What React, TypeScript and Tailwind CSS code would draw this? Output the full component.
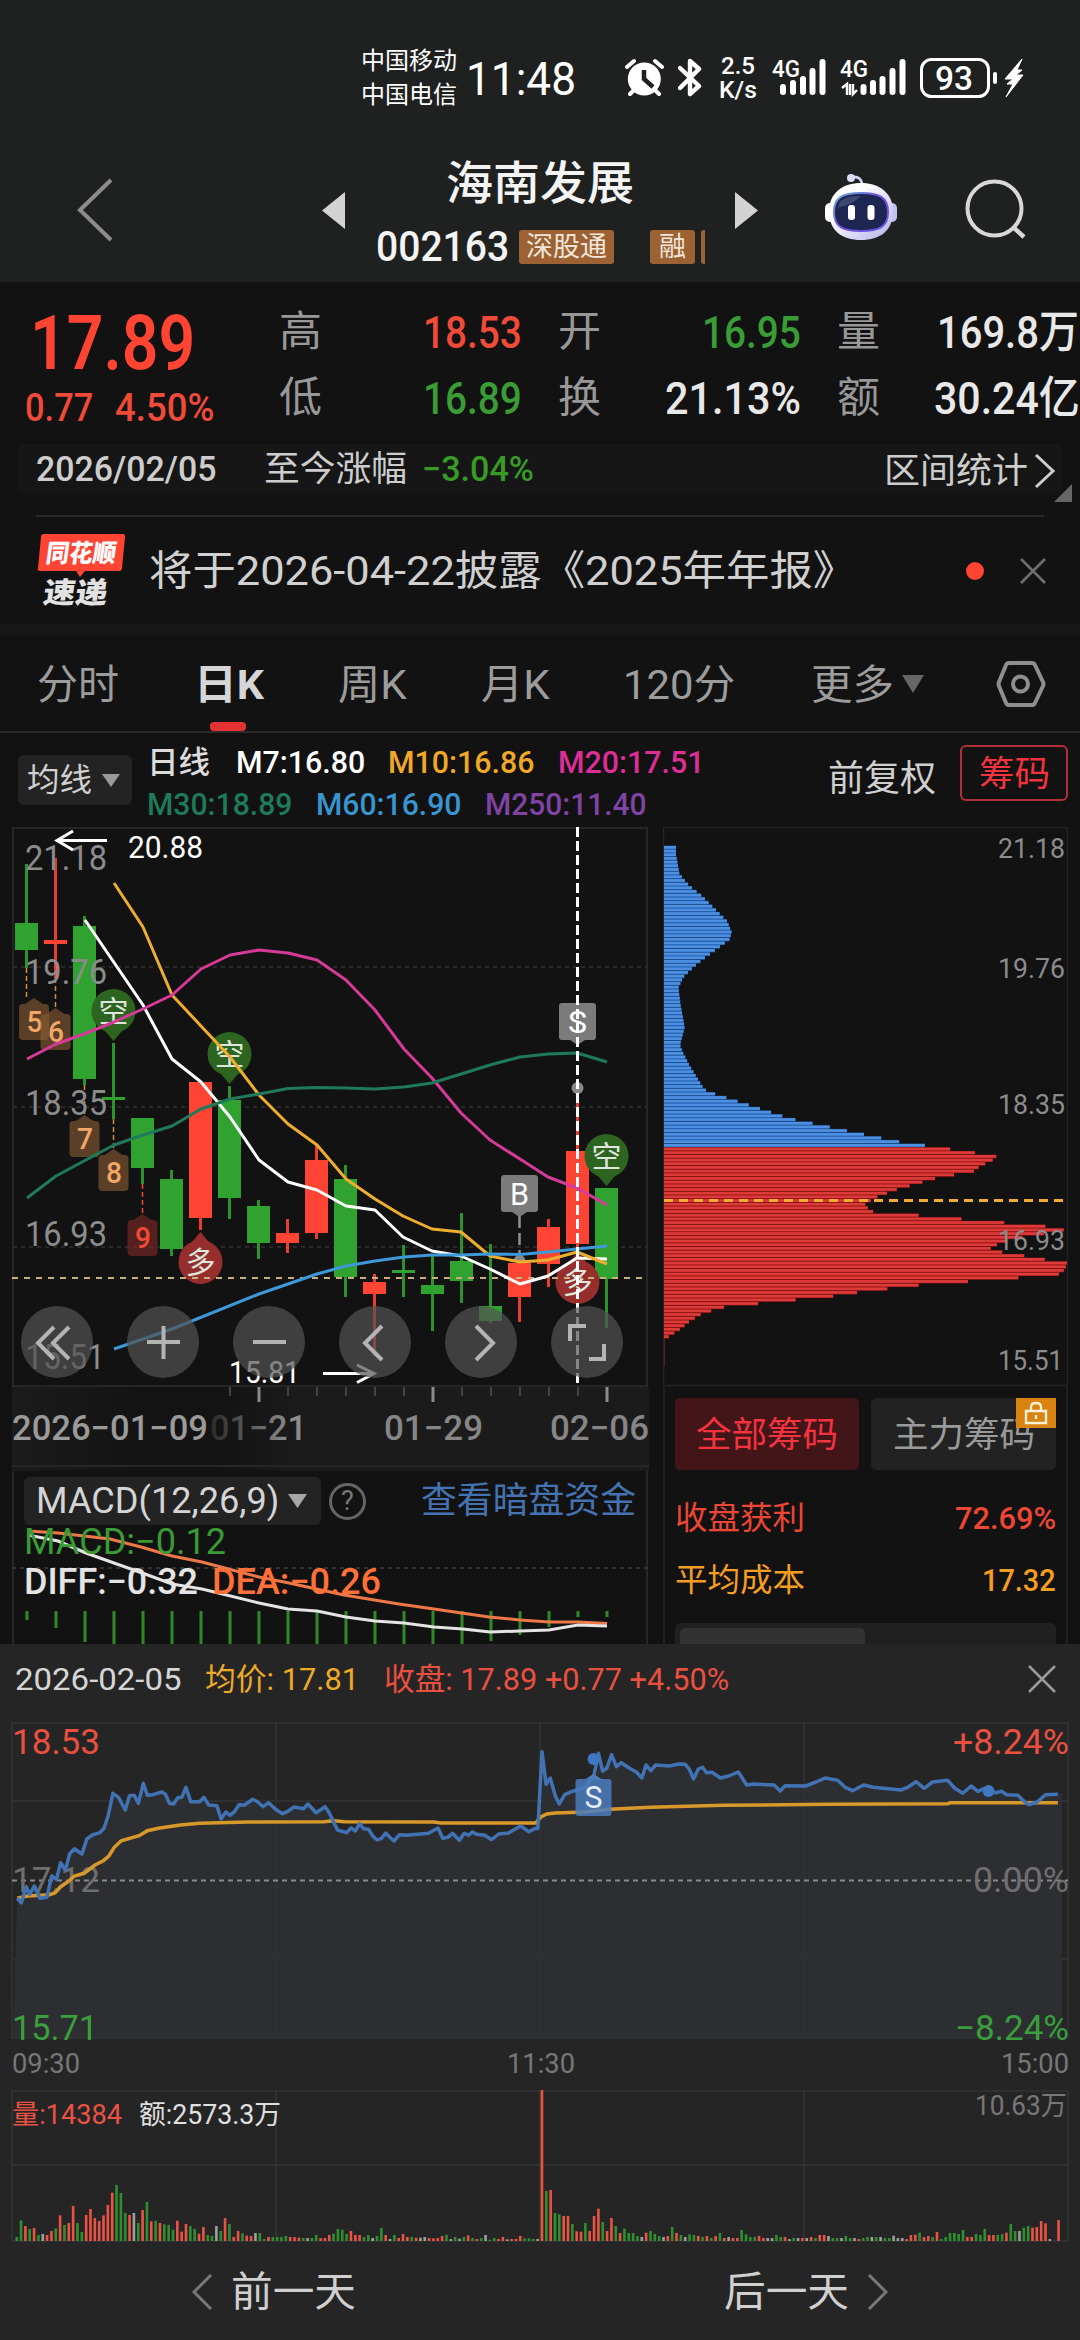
import React, { useLayoutEffect, useRef } from 'react';

// Text squeezed or stretched horizontally so that it fills exactly `w` pixels
function Fit({ w, className = '', children }: { w: number; className?: string; children: React.ReactNode }) {
  const ref = useRef<HTMLSpanElement>(null);
  useLayoutEffect(() => {
    const el = ref.current;
    if (el) el.style.transform = `scaleX(${w / el.offsetWidth})`;
  }, [w]);
  return (
    <span className={`block shrink-0 leading-none ${className}`} style={{ width: w }}>
      <span ref={ref} className="inline-block origin-left whitespace-pre align-top leading-none">
        {children}
      </span>
    </span>
  );
}

type LabelProps = { x: number; y: number; w: number; size: number; fill: string; children: string; weight?: number; opacity?: number };

function Label({ x, y, w, size, fill, children, weight = 400, opacity = 1 }: LabelProps) {
  return (
    <text x={x} y={y} fontSize={size} fill={fill} fontWeight={weight} textLength={w} lengthAdjust="spacingAndGlyphs" opacity={opacity}>
      {children}
    </text>
  );
}

const RED = '#ff4433';
const GREEN = '#30a22f';

function Bars({ x }: { x: number[] }) {
  const tops = [85, 81, 77, 69, 60];
  return (
    <g stroke="#fff" strokeWidth="6" strokeLinecap="round">
      {x.map((v, i) => (
        <line key={v} x1={v} x2={v} y1={tops[i] + 3} y2={93} />
      ))}
    </g>
  );
}

function StatusBar() {
  return (
    <div className="flex h-[156px] items-center pl-[361px] text-white">
      <div className="flex flex-col gap-[10px] text-[24px]">
        <Fit w={96}>中国移动</Fit>
        <Fit w={96}>中国电信</Fit>
      </div>
      <Fit w={110} className="ml-[9px] text-[47px]">11:48</Fit>
      <svg className="ml-[49px] h-[40px] w-[39px]" viewBox="624 58 39 40">
        <circle cx="643.3" cy="79" r="16.5" fill="#fff" />
        <path d="M626 67l7-6M661 67l-7-6M629 94l4-4M658 94l-4-4" stroke="#fff" strokeWidth="4" strokeLinecap="round" />
        <path d="M643 70v9l9 8" fill="none" stroke="#1f2121" strokeWidth="4.5" />
      </svg>
      <svg className="ml-[14px] h-[40px] w-[24px]" viewBox="677 58 24 40">
        <path d="M679 68l19 18-9 8V61l9 8-19 19" fill="none" stroke="#fff" strokeWidth="4.4" strokeLinejoin="round" strokeLinecap="round" />
      </svg>
      <div className="ml-[17px] flex flex-col items-center text-[24px] font-medium">
        <Fit w={34} className="h-[24px]">2.5</Fit>
        <Fit w={38} className="h-[24px]">K/s</Fit>
      </div>
      <svg className="ml-[14px] h-[42px] w-[56px] overflow-visible" viewBox="771 58 56 42">
        <Label x={772} y={78} w={28} size={24} fill="#fff" weight={500}>4G</Label>
        <Bars x={[783, 793, 803, 812.5, 822.5]} />
      </svg>
      <svg className="ml-[13px] h-[42px] w-[67px] overflow-visible" viewBox="840 58 67 42">
        <Label x={840} y={78} w={28} size={24} fill="#fff" weight={500}>4G</Label>
        <path d="M842 89l5-4v11M850 85v11M853 85v10l4-4" fill="none" stroke="#fff" strokeWidth="2.4" />
        <Bars x={[863.5, 873, 882.5, 892.5, 902.5]} />
      </svg>
      <svg className="ml-[12px] h-[42px] w-[106px]" viewBox="919 57 106 42">
        <rect x="921.5" y="59.5" width="67" height="37" rx="10" fill="none" stroke="#fff" strokeWidth="3" />
        <Label x={935} y={90} w={38} size={33} fill="#fff" weight={500}>93</Label>
        <path d="M995 74v8" stroke="#fff" strokeWidth="4" strokeLinecap="round" />
        <path d="M1022 59l-17 20h8l-6 5 6 0-7 13 17-22h-7l6-5h-5z" fill="#fff" stroke="#fff" strokeLinejoin="round" />
      </svg>
    </div>
  );
}

function Robot() {
  return (
    <svg className="h-[68px] w-[74px]" viewBox="824 173 74 68">
      <defs>
        <linearGradient id="shell" x1="0" y1="0" x2="1" y2="1">
          <stop offset="0.3" stopColor="#fff" />
          <stop offset="1" stopColor="#b5b0ea" />
        </linearGradient>
        <linearGradient id="rim" x1="0" y1="0" x2="1" y2="1">
          <stop offset="0" stopColor="#5fb0d8" />
          <stop offset="0.5" stopColor="#7a4be0" />
          <stop offset="1" stopColor="#5a58d8" />
        </linearGradient>
      </defs>
      <path d="M852 177c7-1 10 3 10 8" fill="none" stroke="#d4d4f4" strokeWidth="2.6" />
      <circle cx="851" cy="178" r="4" fill="#dcdcf8" />
      <rect x="825" y="203" width="10" height="19" rx="5" fill="#fff" />
      <rect x="887" y="203" width="10" height="19" rx="5" fill="#c2c0f2" />
      <path d="M861 183c18 0 32 10 32 28 0 20-13 29-32 29s-32-9-32-29c0-18 14-28 32-28z" fill="url(#shell)" />
      <path d="M861 193c18 0 27 4 27 19s-9 19-27 19-27-4-27-19 9-19 27-19z" fill="#1d2650" stroke="url(#rim)" strokeWidth="2" />
      <path d="M839 203c4-6 12-7 22-7-5 6-14 9-23 12z" fill="#3c4670" />
      <rect x="848" y="205" width="7" height="15" rx="3" fill="#fff" />
      <rect x="867.500" y="205" width="7" height="15" rx="3" fill="#fff" />
    </svg>
  );
}

function Header() {
  return (
    <div className="flex h-[126px] items-start">
      <svg className="mt-[21px] ml-[75px] h-[66px] w-[40px]" viewBox="0 0 40 66">
        <path d="M36 3L5 33l31 30" fill="none" stroke="#8c8c8c" strokeWidth="4" />
      </svg>
      <svg className="mt-[36px] ml-[206px] h-[37px] w-[25px]" viewBox="0 0 25 37">
        <path d="M24 0v37L1 18.500z" fill="#d3d3d3" />
      </svg>
      <div className="ml-[30px] flex w-[329px] flex-col">
        <Fit w={188} className="mt-[4px] ml-[70px] text-[46px] font-medium text-[#f4f4f4]">海南发展</Fit>
        <div className="mt-[20px] flex items-center">
          <Fit w={133} className="text-[42px] font-medium text-[#f4f4f4]">002163</Fit>
          <div className="ml-[10px] flex h-[34px] w-[95px] items-center justify-center rounded-[3px] bg-[#9c6234] text-[27px] text-[#f2e6da]">
            <Fit w={81}>深股通</Fit>
          </div>
          <div className="ml-[36px] flex h-[34px] w-[45px] items-center justify-center rounded-[3px] bg-[#9c6234] text-[27px] text-[#f2e6da]">
            <Fit w={27}>融</Fit>
          </div>
          <div className="ml-[6px] h-[34px] w-[4px] rounded-l-[3px] bg-[#9c6234]" />
        </div>
      </div>
      <svg className="mt-[36px] ml-[29px] h-[37px] w-[25px]" viewBox="0 0 25 37">
        <path d="M1 0v37l23-18.500z" fill="#d3d3d3" />
      </svg>
      <div className="mt-[17px] ml-[65px]">
        <Robot />
      </div>
      <svg className="mt-[22px] ml-[67px] h-[62px] w-[62px]" viewBox="965 178 62 62">
        <circle cx="994.500" cy="208.500" r="27" fill="none" stroke="#d8d8d8" strokeWidth="4" />
        <path d="M1013 227l11 10" stroke="#d8d8d8" strokeWidth="4.500" />
      </svg>
    </div>
  );
}

function Quote() {
  return (
    <div className="flex h-[162px] text-[45px] font-medium text-[#e8e8e8]">
      <div className="w-[280px]">
        <Fit w={165} className="mt-[23px] ml-[30px] text-[76px] font-semibold text-[#ff4433]">17.89</Fit>
        <div className="mt-[8px] flex text-[38px] text-[#f04a38]">
          <Fit w={68} className="ml-[25px]">0.77</Fit>
          <Fit w={99} className="ml-[22px]">4.50%</Fit>
        </div>
      </div>
      <div className="flex-1 pt-[17px]">
        <div className="flex h-[66px] items-center">
          <Fit w={43} className="text-[42px] font-normal text-[#989898]">高</Fit>
          <Fit w={99} className="ml-[101px] text-[#f04a38]">18.53</Fit>
          <Fit w={43} className="ml-[36px] text-[42px] font-normal text-[#989898]">开</Fit>
          <Fit w={99} className="ml-[101px] text-[#399c35]">16.95</Fit>
          <Fit w={43} className="ml-[36px] text-[42px] font-normal text-[#989898]">量</Fit>
          <Fit w={142} className="ml-[57px]">169.8万</Fit>
        </div>
        <div className="flex h-[66px] items-center">
          <Fit w={43} className="text-[42px] font-normal text-[#989898]">低</Fit>
          <Fit w={99} className="ml-[101px] text-[#399c35]">16.89</Fit>
          <Fit w={43} className="ml-[36px] text-[42px] font-normal text-[#989898]">换</Fit>
          <Fit w={136} className="ml-[64px]">21.13%</Fit>
          <Fit w={43} className="ml-[36px] text-[42px] font-normal text-[#989898]">额</Fit>
          <Fit w={146} className="ml-[54px]">30.24亿</Fit>
        </div>
      </div>
    </div>
  );
}

function DateBar() {
  return (
    <div className="relative mx-[18px] flex h-[51px] items-center rounded-md bg-[#161616] pl-[18px] text-[35px] text-[#cdcdcd]">
      <Fit w={180} className="font-medium">2026/02/05</Fit>
      <Fit w={143} className="ml-[48px]">至今涨幅</Fit>
      <Fit w={112} className="ml-[15px] font-medium text-[#399a26]">−3.04%</Fit>
      <Fit w={144} className="mt-[4px] ml-[350px]">区间统计</Fit>
      <svg className="mt-[2px] ml-[6px] h-[36px] w-[22px]" viewBox="0 0 22 36">
        <path d="M2 2l17 16L2 34" fill="none" stroke="#cdcdcd" strokeWidth="3" />
      </svg>
      <svg className="absolute top-[40px] -right-[10px] h-[18px] w-[18px]" viewBox="0 0 18 18">
        <path d="M18 0v18H0z" fill="#666" />
      </svg>
    </div>
  );
}

function News() {
  return (
    <div className="flex h-[107px] items-center pl-[36px]">
      <svg className="h-[76px] w-[92px]" viewBox="36 533 92 76">
        <path d="M44 534h79q2 0 2 3l-3 31q0 3-3 3H85l-5 6-4-6H40q-3 0-2-3l3-31q0-3 3-3z" fill="#ff4433" />
        <g transform="skewX(-8) translate(79 0)">
          <Label x={45} y={562} w={70} size={25} fill="#fff" weight={800}>同花顺</Label>
          <Label x={48} y={603} w={64} size={29} fill="#e2e2e2" weight={900}>速递</Label>
        </g>
      </svg>
      <Fit w={707} className="mt-[2px] ml-[21px] text-[41px] text-[#d0d0d0]">将于2026-04-22披露《2025年年报》</Fit>
      <div className="ml-[110px] h-[18px] w-[18px] rounded-full bg-[#ff4433]" />
      <svg className="ml-[36px] h-[26px] w-[26px]" viewBox="0 0 26 26">
        <path d="M1 1l24 24M25 1L1 25" stroke="#707070" strokeWidth="2.500" />
      </svg>
    </div>
  );
}

function Tabs() {
  return (
    <div className="relative flex h-[97px] items-center border-b-2 border-[#2a2a2a] text-[41px] text-[#9c9c9c]">
      <Fit w={82} className="mt-[4px] ml-[37px]">分时</Fit>
      <Fit w={70} className="mt-[4px] ml-[75px] font-bold text-[#d6d6d6]">日K</Fit>
      <Fit w={69} className="mt-[4px] ml-[74px]">周K</Fit>
      <Fit w={69} className="mt-[4px] ml-[74px]">月K</Fit>
      <Fit w={112} className="mt-[4px] ml-[73px]">120分</Fit>
      <Fit w={83} className="mt-[4px] ml-[76px]">更多</Fit>
      <svg className="ml-[8px] h-[18px] w-[22px]" viewBox="0 0 22 18">
        <path d="M0 0h22L11 18z" fill="#666" />
      </svg>
      <svg className="ml-[72px] h-[48px] w-[50px]" viewBox="0 0 50 48">
        <path d="M13 3h23q2 0 3 2l8 17q1 2 0 4l-8 17q-1 2-3 2H13q-2 0-3-2L3 26q-1-2 0-4l7-17q1-2 3-2z" fill="none" stroke="#8e8e8e" strokeWidth="4" />
        <circle cx="24.500" cy="24" r="7.500" fill="none" stroke="#8e8e8e" strokeWidth="4" />
      </svg>
      <div className="absolute bottom-0 left-[210px] h-[9px] w-[36px] rounded-[4px] bg-[#e53333]" />
    </div>
  );
}

function MaRow() {
  return (
    <div className="flex h-[94px] text-[32px] font-medium">
      <div className="mt-[22px] ml-[18px] flex h-[50px] w-[114px] items-center rounded-[6px] bg-[#232323] pl-[9px] text-[#d0d0d0]">
        <Fit w={65} className="font-normal">均线</Fit>
        <svg className="ml-[10px] h-[13px] w-[18px]" viewBox="0 0 18 13">
          <path d="M0 0h18l-9 13z" fill="#9a9a9a" />
        </svg>
      </div>
      <div className="ml-[15px] w-[560px] pt-[13px]">
        <div className="flex h-[32px] items-center">
          <Fit w={63} className="text-[31px] text-[#dcdcdc]">日线</Fit>
          <Fit w={129} className="ml-[26px] text-white">M7:16.80</Fit>
          <Fit w={146} className="ml-[23px] text-[#f0a828]">M10:16.86</Fit>
          <Fit w={146} className="ml-[24px] text-[#dc2f96]">M20:17.51</Fit>
        </div>
        <div className="mt-[10px] flex h-[32px] items-center">
          <Fit w={145} className="text-[#1f7a58]">M30:18.89</Fit>
          <Fit w={145} className="ml-[24px] text-[#3a94cf]">M60:16.90</Fit>
          <Fit w={162} className="ml-[24px] text-[#7f44a4]">M250:11.40</Fit>
        </div>
      </div>
      <Fit w={108} className="mt-[28px] ml-[121px] text-[36px] font-normal text-[#cfcfcf]">前复权</Fit>
      <div className="mt-[12px] ml-[24px] flex h-[56px] w-[108px] items-center justify-center rounded-[6px] border-2 border-[#b02f38] text-[35px] font-normal text-[#f5333f]">
        <Fit w={71} className="mt-[3px]">筹码</Fit>
      </div>
    </div>
  );
}

// [high, bodyTop, bodyBottom, low, rising]
const candles: [number, number, number, number, boolean][] = [
  [864, 923, 950, 968, false], [858, 940, 944, 978, true], [916, 926, 1079, 1085, false],
  [1043, 1097, 1100, 1119, false], [1118, 1118, 1168, 1184, false], [1170, 1179, 1249, 1256, false],
  [1082, 1082, 1218, 1230, true], [1086, 1100, 1198, 1219, false], [1200, 1206, 1243, 1259, false],
  [1219, 1233, 1243, 1253, true], [1146, 1160, 1233, 1239, true], [1165, 1179, 1277, 1297, false],
  [1274, 1282, 1294, 1356, true], [1245, 1270, 1273, 1297, false], [1255, 1285, 1294, 1331, false],
  [1213, 1261, 1281, 1303, false], [1244, 1306, 1321, 1323, false], [1258, 1263, 1297, 1322, true],
  [1219, 1227, 1264, 1287, true], [1088, 1151, 1244, 1256, true], [1188, 1188, 1279, 1328, false],
];

const averages = [
  { color: '#ffffff', points: '85,920 143,1005 172,1059 201,1082 230,1117 259,1160 288,1182 317,1190 346,1206 375,1210 403,1237 432,1251 461,1256 490,1269 520,1284 548,1276 577,1258 607,1259' },
  { color: '#edad2e', points: '114,883 143,927 172,995 201,1026 230,1057 259,1095 288,1124 317,1145 346,1179 375,1199 403,1216 432,1229 461,1232 490,1256 520,1262 548,1260 577,1252 607,1264' },
  { color: '#d63a98', points: '27,1059 56,1044 84,1034 114,1022 143,1009 172,995 201,969 230,955 259,950 288,953 317,960 346,980 375,1010 404,1049 432,1078 461,1113 490,1140 520,1159 548,1177 577,1188 607,1205' },
  { color: '#1f7a5c', points: '27,1198 56,1176 84,1161 114,1145 143,1135 172,1126 201,1109 230,1099 259,1094 288,1088.5 317,1087.5 346,1088 375,1089 404,1087 432,1083 461,1074 490,1065 520,1057 548,1054 577,1053 607,1062' },
  { color: '#3d98d8', points: '114,1349 172,1329 259,1294 317,1274 346,1266 375,1261 404,1257 432,1255 461,1255 490,1254 520,1254.5 548,1252 577,1249 607,1246' },
];

function CountTag({ x, y, n, hot }: { x: number; y: number; n: string; hot?: boolean }) {
  const bg = hot ? '#7f2a26' : '#8a5c36';
  return (
    <g>
      <path d={`M${x - 9} ${y}l9-6 9 6`} fill={bg} opacity="0.6" />
      <rect x={x - 15} y={y} width="30" height="36" rx="4" fill={bg} opacity="0.62" />
      <Label x={x - 7.5} y={y + 28} w={16} size={29} fill={hot ? '#f04a38' : '#f2a766'} weight={500}>{n}</Label>
    </g>
  );
}

function Bubble({ x, y, short }: { x: number; y: number; short?: boolean }) {
  const fill = short ? '#2c6420' : '#962e2e';
  return (
    <g>
      <circle cx={x} cy={y} r="22" fill={fill} />
      <path d={short ? `M${x - 11} ${y + 17}l11 13 11-13z` : `M${x - 11} ${y - 17}l11-13 11 13z`} fill={fill} />
      <Label x={x - 15} y={y + 11} w={30} size={30} fill="#dfe6dc">{short ? '空' : '多'}</Label>
    </g>
  );
}

function TradeTag({ x, y, children }: { x: number; y: number; children: string }) {
  return (
    <g>
      <path d={`M${x - 9} ${y + 36}l9 6 9-6z`} fill="#7b7b7b" />
      <rect x={x - 18.5} y={y} width="37" height="37" rx="3" fill="#7b7b7b" />
      <Label x={x - 9.5} y={y + 30} w={19} size={32} fill="#fff">{children}</Label>
    </g>
  );
}

function CandleChart() {
  return (
    <svg className="block h-[560px] w-[637px] overflow-visible" viewBox="12 827 637 560">
      <path d="M13 1387V828h634v558H13" fill="none" stroke="#262626" strokeWidth="2" />
      <g stroke="#292929" strokeWidth="2" strokeDasharray="4 4">
        <path d="M13 967h634M13 1107h634M13 1247h634" />
      </g>
      {candles.map(([high, top, bottom, low, up], i) => {
        const x = 26.5 + 29 * i;
        return (
          <g key={i} fill={up ? RED : GREEN}>
            <rect x={x - 1.5} y={high} width="3" height={low - high} opacity="0.9" />
            <rect x={x - 11.5} y={top} width="23" height={bottom - top} />
          </g>
        );
      })}
      <g strokeDasharray="5 3" strokeWidth="1.5" stroke="#d08a50">
        <path d="M26.500 968v30M55.500 978v30M84.500 1085v30M113.500 1119v30" />
        <path d="M142.500 1184v30" stroke="#f04a38" />
      </g>
      <g>
        <Label x={25} y={870} w={82} size={35} fill="#8c8c8c">21.18</Label>
        <Label x={25} y={984} w={82} size={35} fill="#8c8c8c">19.76</Label>
        <Label x={25} y={1115} w={82} size={35} fill="#8c8c8c">18.35</Label>
        <Label x={25} y={1246} w={82} size={35} fill="#8c8c8c">16.93</Label>
        <Label x={25} y={1369} w={80} size={35} fill="#8c8c8c">15.51</Label>
      </g>
      <CountTag x={34} y={1004} n="5" />
      <CountTag x={55.5} y={1014} n="6" />
      <CountTag x={84.5} y={1121} n="7" />
      <CountTag x={113.5} y={1155} n="8" />
      <CountTag x={142.5} y={1220} n="9" hot />
      <Bubble x={113.5} y={1011} short />
      <Bubble x={229.5} y={1054} short />
      <Bubble x={606.5} y={1156} short />
      <Bubble x={200.5} y={1262} />
      <Bubble x={577.5} y={1282} />
      <path d="M12 1278h636" stroke="#cbb07c" strokeWidth="2" strokeDasharray="6 6" />
      <TradeTag x={577.5} y={1003}>S</TradeTag>
      <TradeTag x={519.5} y={1175}>B</TradeTag>
      <path d="M519.500 1216v40" stroke="#909090" strokeWidth="2.500" strokeDasharray="12 5" />
      <circle cx="577.500" cy="1088" r="6" fill="#888" />
      <path d="M513.500 1261a6 6 0 0 1 12 0z" fill="#888" />
      {averages.map((line) => (
        <polyline key={line.color} points={line.points} fill="none" stroke={line.color} strokeWidth="3" strokeLinejoin="round" />
      ))}
      <path d="M577.500 827v557" stroke="#fff" strokeWidth="3" strokeDasharray="10 4" />
      <g fill="none" stroke="#fff" strokeWidth="3">
        <path d="M107 840.500H58M73 831l-16 9.500L73 850" />
        <path d="M323 1373.500h50M357 1365l17 8.500-17 9" />
      </g>
      <Label x={128} y={858} w={75} size={31} fill="#fff">20.88</Label>
      <Label x={229} y={1383} w={71} size={31} fill="#fff">15.81</Label>
    </svg>
  );
}

const tools = [
  'M33 21L17 37l16 16M48 21L32 37l16 16',
  'M20 36h33M36.500 20v33',
  'M20 36h33',
  'M43 20L26 37l17 17',
  'M31 20l17 17-17 17',
  'M19 35V20h16M38 53h15V38',
];

function DateAxis() {
  const ticks = [230, 259, 288, 317, 346, 375, 404, 433, 462, 491, 520, 549, 578, 607];
  const long = [259, 433, 607];
  return (
    <svg className="block h-[84px] w-[637px]" viewBox="12 1387 637 84">
      <defs>
        <linearGradient id="fade">
          <stop offset="0" stopColor="#1b1b1b" />
          <stop offset="0.2" stopColor="#131313" />
          <stop offset="0.33" stopColor="#131313" />
          <stop offset="0.45" stopColor="#1b1b1b" />
        </linearGradient>
        <linearGradient id="dim" gradientUnits="userSpaceOnUse" x1="212" x2="290">
          <stop offset="0" stopColor="#2c2c2c" />
          <stop offset="1" stopColor="#8c8c8c" />
        </linearGradient>
      </defs>
      <rect x="12" y="1387" width="637" height="84" fill="url(#fade)" />
      {ticks.map((x) => (
        <line key={x} x1={x} x2={x} y1={1387} y2={long.includes(x) ? 1402 : 1396} stroke={long.includes(x) ? '#8c8c8c' : '#444'} strokeWidth={long.includes(x) ? 3 : 2} />
      ))}
      <Label x={12} y={1440} w={196} size={35} fill="#9a9a9a" weight={500}>2026−01−09</Label>
      <Label x={210} y={1440} w={97} size={35} fill="url(#dim)" weight={500}>01−21</Label>
      <Label x={384} y={1440} w={99} size={35} fill="#868686" weight={500}>01−29</Label>
      <Label x={550} y={1440} w={99} size={35} fill="#868686" weight={500}>02−06</Label>
      <path d="M12 1466h637" stroke="#262626" strokeWidth="2" />
    </svg>
  );
}

const macdBottoms = [1620, 1628, 1642, 1644, 1644, 1644, 1644, 1644, 1644, 1644, 1644, 1644, 1644, 1644, 1644, 1644, 1641, 1635, 1627, 1617, 1617];

function Macd() {
  return (
    <div className="relative h-[173px] w-[637px]">
      <svg className="absolute inset-0 h-[173px] w-[637px]" viewBox="12 1471 637 173">
        <path d="M13 1471v173M647 1471v173" stroke="#262626" strokeWidth="2" />
        <path d="M12 1568h636" stroke="#333" strokeWidth="2" strokeDasharray="4 4" />
        {macdBottoms.map((b, i) => (
          <rect key={i} x={25.5 + 29 * i} y="1611" width="3" height={b - 1611} fill="#2f8a26" />
        ))}
        <polyline points="28,1531 58,1533 110,1539 141,1547 172,1556 202,1562 259,1577 289,1583 344,1595 399,1604 434,1609 489,1617 520,1620 549,1622 578,1622 607,1623.5" fill="none" stroke="#ee7848" strokeWidth="3" />
        <polyline points="28,1535 58,1541 86,1553 114,1563 145,1574 172,1584 202,1589 259,1603 288,1609 317,1611 346,1617 375,1621 404,1623 434,1627 463,1629 490,1632 520,1631 549,1630 578,1625 607,1626" fill="none" stroke="#e4e4e4" strokeWidth="3" />
        <Label x={24} y={1554} w={202} size={36} fill="#3a9a35">MACD:−0.12</Label>
        <Label x={24} y={1594} w={174} size={36} fill="#e4e4e4" weight={500}>DIFF:−0.32</Label>
        <Label x={212} y={1594} w={169} size={36} fill="#ff7038" weight={500}>DEA:−0.26</Label>
      </svg>
      <div className="relative flex items-center pt-[6px] pl-[12px]">
        <div className="flex h-[48px] w-[297px] items-center rounded-[6px] bg-[#232323] pl-[12px] text-[36px] text-[#d4d4d4]">
          <Fit w={243}>MACD(12,26,9)</Fit>
          <svg className="ml-[9px] h-[14px] w-[19px]" viewBox="0 0 19 14">
            <path d="M0 0h19l-9.500 14z" fill="#a8a8a8" />
          </svg>
        </div>
        <div className="ml-[8px] flex h-[37px] w-[37px] items-center justify-center rounded-full border-[3px] border-[#666] text-[27px] leading-none text-[#777]">
          ?
        </div>
        <Fit w={215} className="ml-[55px] text-[36px] text-[#4573b2]">查看暗盘资金</Fit>
      </div>
    </div>
  );
}

// chip distribution outline, [row offset, bar end]
const chipShape: [number, number][] = [
  [73, 78], [98, 78], [150, 88], [165, 100], [186, 120], [212, 155], [243, 188], [284, 232], [315, 245], [335, 238],
  [357, 207], [388, 162], [410, 133], [440, 100], [470, 85], [520, 92], [580, 104], [630, 90], [650, 98], [690, 120],
  [755, 163], [767, 195], [836, 420], [900, 740], [910, 815], [921, 896], [931, 968], [941, 1040], [952, 1029],
  [970, 990], [985, 970], [1000, 870], [1035, 740], [1055, 683], [1075, 645], [1096, 660], [1106, 793], [1137, 1180],
  [1147, 1248], [1158, 1185], [1168, 1120], [1178, 1075], [1188, 1045], [1198, 1017], [1209, 1050], [1219, 1115],
  [1230, 1180], [1240, 1251], [1250, 1248], [1271, 1236], [1281, 1121], [1292, 960], [1302, 812], [1322, 630],
  [1333, 556], [1363, 228], [1374, 186], [1384, 154], [1405, 118], [1426, 90], [1447, 56], [1452, 45],
];

function chipLength(z: number) {
  const i = chipShape.findIndex(([row]) => row >= z);
  if (i <= 0) return chipShape[0][1];
  const [r0, v0] = chipShape[i - 1];
  const [r1, v1] = chipShape[i];
  return v0 + ((v1 - v0) * (z - r0)) / (r1 - r0);
}

const chipRows = Array.from({ length: 134 }, (_, i) => 77 + i * 10.3);

function ChipChart() {
  return (
    <svg className="block h-[560px] w-[405px]" viewBox="663 827 405 560">
      <path d="M663.500 1387V827.500h404V1387M663 1385.500h405" fill="none" stroke="#242424" strokeWidth="1.500" />
      {chipRows.map((z) => {
        const y = 820 + z / 2.8;
        const width = (chipLength(z) - 42) / 3;
        const blue = z < 916;
        return (
          <g key={z}>
            <rect x="664" y={y - 1.84} width={width} height="3.68" fill={blue ? '#1f5dae' : '#9c1414'} />
            <rect x="664" y={y - 1.5} width={width} height="2.7" fill={blue ? '#4d90e2' : '#dc3b39'} />
          </g>
        );
      })}
      <path d="M664.500 1339v28" stroke="#5a2020" strokeWidth="1" />
      <path d="M664 1200.500h400" stroke="#f2ab33" strokeWidth="3" strokeDasharray="9 6" />
      <Label x={998} y={857.5} w={67} size={27} fill="#8c8c8c">21.18</Label>
      <Label x={998} y={978} w={67} size={27} fill="#8c8c8c">19.76</Label>
      <Label x={998} y={1114} w={67} size={27} fill="#8c8c8c">18.35</Label>
      <Label x={998} y={1250} w={67} size={27} fill="#8c8c8c">16.93</Label>
      <Label x={998} y={1370} w={65} size={27} fill="#8c8c8c">15.51</Label>
    </svg>
  );
}

function ChipPanel() {
  return (
    <div className="w-[405px]">
      <ChipChart />
      <div className="h-[257px] border-x-2 border-[#202020] pt-[11px] pr-[10px] pl-[10px] text-[35px]">
        <div className="flex gap-[12px]">
          <div className="flex h-[72px] w-[184px] items-center justify-center rounded-[5px] bg-[#421518] text-[#f5333f]">
            <Fit w={142} className="mt-[3px]">全部筹码</Fit>
          </div>
          <div className="relative flex h-[72px] w-[185px] items-center justify-center rounded-[5px] bg-[#222222] text-[#9a9a9a]">
            <Fit w={142} className="mt-[3px]">主力筹码</Fit>
            <div className="absolute top-0 right-0 flex h-[30px] w-[40px] items-center justify-center bg-[#d98310]">
              <svg className="h-[24px] w-[24px]" viewBox="0 0 24 24">
                <path d="M2 10h20v12H2zM7 10V6q0-4 5-4t5 4v4M12 14v4" fill="none" stroke="#fff0d8" strokeWidth="2.400" />
              </svg>
            </div>
          </div>
        </div>
        <div className="mt-[17px] flex h-[62px] items-center justify-between text-[32px] text-[#ec4634]">
          <Fit w={130}>收盘获利</Fit>
          <Fit w={101} className="font-medium">72.69%</Fit>
        </div>
        <div className="flex h-[62px] items-center justify-between text-[32px] text-[#f59d22]">
          <Fit w={130}>平均成本</Fit>
          <Fit w={74} className="font-medium">17.32</Fit>
        </div>
        <div className="mt-[12px] h-[60px] rounded-t-[6px] bg-[#202020] pt-[5px] pl-[5px]">
          <div className="h-[55px] w-[185px] rounded-t-[5px] bg-[#323232]" />
        </div>
      </div>
    </div>
  );
}

// price and average paths on a 1568 x 1320 grid
const price: [number, number][] = [
  [25, 745], [31, 758], [38, 710], [43, 733], [50, 708], [58, 745], [68, 742], [75, 678], [82, 688], [88, 638], [95, 660],
  [101, 612], [108, 596], [119, 612], [126, 567], [134, 555], [145, 548], [151, 535], [157, 498], [164, 430], [172, 442],
  [182, 480], [188, 437], [195, 436], [201, 460], [208, 400], [214, 436], [222, 434], [235, 426], [240, 432], [246, 460],
  [252, 462], [258, 443], [264, 442], [270, 412], [277, 455], [290, 455], [296, 442], [303, 465], [315, 467], [321, 507],
  [328, 486], [334, 496], [341, 484], [347, 464], [355, 465], [367, 448], [374, 455], [382, 470], [390, 458], [400, 478],
  [410, 491], [418, 484], [427, 471], [441, 476], [447, 462], [459, 488], [472, 470], [478, 488], [490, 540], [503, 548],
  [510, 534], [516, 543], [522, 521], [528, 536], [535, 538], [542, 560], [548, 570], [554, 565], [560, 549], [566, 562],
  [572, 573], [580, 554], [590, 556], [622, 550], [636, 534], [643, 565], [650, 562], [657, 550], [667, 571], [674, 550],
  [680, 556], [686, 546], [692, 553], [704, 556], [714, 569], [724, 552], [738, 549], [756, 528], [768, 545], [776, 536],
  [781, 535], [787, 305], [793, 403], [799, 384], [806, 436], [812, 462], [820, 434], [830, 425], [838, 420], [850, 412],
  [856, 395], [862, 378], [869, 310], [875, 363], [881, 355], [888, 314], [895, 350], [902, 338], [914, 355], [924, 366],
  [932, 384], [938, 345], [945, 362], [952, 345], [972, 348], [985, 342], [995, 343], [1001, 358], [1007, 387],
  [1014, 357], [1020, 352], [1026, 368], [1034, 367], [1046, 384], [1058, 378], [1072, 366], [1078, 385], [1084, 405],
  [1094, 402], [1124, 405], [1133, 423], [1140, 407], [1170, 408], [1186, 395], [1198, 384], [1216, 391], [1228, 413],
  [1238, 422], [1254, 405], [1268, 412], [1290, 416], [1308, 420], [1318, 412], [1330, 395], [1342, 415], [1354, 396],
  [1376, 391], [1386, 414], [1398, 430], [1410, 408], [1420, 424], [1428, 416], [1436, 422], [1446, 428], [1454, 424],
  [1462, 434], [1478, 436], [1486, 452], [1494, 464], [1506, 456], [1518, 434], [1536, 433],
];

const avg: [number, number][] = [
  [25, 745], [40, 738], [72, 734], [80, 728], [88, 710], [98, 696], [108, 678], [122, 670], [138, 645], [150, 632],
  [158, 618], [166, 592], [176, 572], [202, 557], [214, 542], [230, 535], [262, 525], [290, 520], [360, 516], [470, 515],
  [485, 512], [500, 515], [630, 516], [640, 519], [778, 519], [786, 500], [794, 492], [806, 489], [850, 486], [885, 478],
  [945, 472], [1050, 466], [1200, 463], [1376, 461], [1380, 458], [1536, 458],
];

const toPoints = (data: [number, number][]) => data.map(([x, y]) => `${(x / 1.452).toFixed(1)},${(1650 + y / 3).toFixed(1)}`).join(' ');

function TimeChart() {
  return (
    <svg className="block h-[372px] w-[1080px]" viewBox="0 1708 1080 372">
      <polygon points={`${toPoints(price)} 1062,1794 1062,2038 13,2038`} fill="#2d2e31" />
      <g stroke="#2f3031" strokeWidth="2" fill="none">
        <path d="M12 1723h1056v315H12zM276 1723v315M540 1723v315M804 1723v315M12 1801h1056M12 1959h1056" />
      </g>
      <path d="M12 1880.500h1056" stroke="#8a8a8a" strokeWidth="2" strokeDasharray="5 4" />
      <Label x={12} y={1754} w={88} size={35} fill="#ea5040">18.53</Label>
      <Label x={953} y={1754} w={116} size={35} fill="#ea5040">+8.24%</Label>
      <Label x={12} y={1892} w={88} size={35} fill="#6f6f6f">17.12</Label>
      <Label x={973} y={1892} w={96} size={35} fill="#6f6f6f">0.00%</Label>
      <Label x={12} y={2040} w={86} size={35} fill="#3a9e3c">15.71</Label>
      <Label x={955} y={2040} w={114} size={35} fill="#3a9e3c">−8.24%</Label>
      <polyline points={toPoints(avg)} fill="none" stroke="#d9992a" strokeWidth="3.5" />
      <polyline points={toPoints(price)} fill="none" stroke="#4173b4" strokeWidth="3.5" strokeLinejoin="round" />
      <circle cx="593.500" cy="1759" r="6" fill="#3f78c0" />
      <circle cx="988.500" cy="1791" r="6" fill="#3f78c0" />
      <path d="M584 1780l9.500-6 9.500 6z" fill="#4a7dbd" />
      <rect x="575.500" y="1779" width="36" height="37" rx="3" fill="#4a7dbd" opacity="0.85" />
      <Label x={584.5} y={1808} w={18} size={31} fill="#e8eef6">S</Label>
      <Label x={12} y={2073} w={68} size={28} fill="#777">09:30</Label>
      <Label x={507} y={2073} w={68} size={28} fill="#777">11:30</Label>
      <Label x={1001} y={2073} w={68} size={28} fill="#777">15:00</Label>
    </svg>
  );
}

// one entry per minute: colour (g down, r up, w flat) and height
const volumes =
  'g12 g62 r45 g36 r39 g18 w21 r18 r30 g38 r77 g48 r54 r105 g54 g27 r78 r96 r69 r60 r77 r108 r145 g168 g144 g84 r78 w84 g54 r93 ' +
  'g117 r59 g61 r54 g50 g48 g34 r61 r28 r51 g45 g36 r22 r42 g18 g15 w45 g30 r69 g51 r12 r30 g23 r16 r15 w24 g24 g6 r12 g12 ' +
  'g12 g12 g15 r12 r12 r10 g9 w9 g9 g18 r9 r9 r18 g22 g36 g34 g21 r30 r18 r18 g12 g18 w9 g15 g39 r18 w6 g18 r9 r21 ' +
  'r12 g12 r10 w10 w12 r9 r8 r9 r15 g19 w6 g12 w7 g12 r17 g9 r6 g9 w18 g4 g9 r6 r12 w5 r6 r6 r15 g8 g8 g6 ' +
  'w6 r453 g150 r153 g84 g80 r75 r75 g51 r29 r28 g54 r30 r75 r97 g57 r30 r69 g45 r24 g37 g24 g24 g15 w12 r25 g30 g21 g15 w12 ' +
  'r15 g42 r24 g18 w12 g20 g18 r15 g12 r15 g9 r15 g24 r9 w12 r9 r9 g33 g20 g12 g12 r15 r9 w9 w9 g18 g12 r12 w6 g9 ' +
  'w9 r9 w9 r12 g9 r18 r18 w15 g9 g9 w9 g15 g9 w9 r6 g9 g12 w12 g12 w12 g9 g9 w16 w9 w9 r6 r18 r19 g25 r12 ' +
  'r15 g12 r27 g6 g12 g24 g24 g21 g33 r12 r12 g21 g18 g36 r18 r18 g18 g21 r25 g51 g30 w30 g40 g45 r40 r42 r60 r53 w6 w0 r63';

const volumeColors: Record<string, string> = { r: '#ea5343', g: '#2f8f2f', w: '#9e9e9e' };

function VolumeChart() {
  return (
    <svg className="block h-[164px] w-[1080px]" viewBox="0 2080 1080 164">
      <g stroke="#2f3030" strokeWidth="2" fill="none">
        <path d="M12 2091h1056v150H12zM276 2091v150M540 2091v150M804 2091v150M12 2165h1056" />
      </g>
      {volumes.split(' ').map((v, i) => {
        const h = Number(v.slice(1)) / 3;
        return <rect key={i} x={15.4 + i * 4.341} y={2241 - h} width="2.6" height={h} fill={volumeColors[v[0]]} />;
      })}
      <Label x={12} y={2124} w={110} size={27} fill="#ea5343">量:14384</Label>
      <Label x={139} y={2124} w={142} size={27} fill="#e0e0e0">额:2573.3万</Label>
      <Label x={975} y={2115} w={92} size={27} fill="#777">10.63万</Label>
    </svg>
  );
}

function DaySheet() {
  return (
    <div className="h-[696px] bg-[#252526]">
      <div className="flex h-[64px] items-center pt-[6px] pl-[15px] text-[31px]">
        <Fit w={167} className="text-[#d6d6d6]">2026-02-05</Fit>
        <Fit w={154} className="ml-[23px] text-[#edaa26]">均价: 17.81</Fit>
        <Fit w={345} className="ml-[25px] text-[#ea5040]">收盘: 17.89 +0.77 +4.50%</Fit>
        <svg className="ml-[299px] h-[28px] w-[28px]" viewBox="0 0 28 28">
          <path d="M1 1l26 26M27 1L1 27" stroke="#9a9a9a" strokeWidth="2.500" />
        </svg>
      </div>
      <TimeChart />
      <VolumeChart />
      <div className="flex h-[96px] items-center text-[41px] text-[#d0d0d0]">
        <svg className="ml-[191px] h-[38px] w-[22px]" viewBox="0 0 22 38">
          <path d="M20 2L3 19l17 17" fill="none" stroke="#777" strokeWidth="3" />
        </svg>
        <Fit w={125} className="ml-[18px]">前一天</Fit>
        <Fit w={125} className="ml-[368px]">后一天</Fit>
        <svg className="ml-[18px] h-[38px] w-[22px]" viewBox="0 0 22 38">
          <path d="M2 2l17 17L2 36" fill="none" stroke="#777" strokeWidth="3" />
        </svg>
      </div>
    </div>
  );
}

export default function App() {
  return (
    <div className="h-[2340px] w-[1080px] overflow-hidden bg-[#121212] font-[Roboto,'Noto_Sans_CJK_SC',sans-serif]">
      <div className="bg-[#1f2121]">
        <StatusBar />
        <Header />
      </div>
      <Quote />
      <DateBar />
      <div className="mx-[36px] mt-[20px] h-[2px] bg-[#2a2a2a]" />
      <News />
      <div className="h-[12px] bg-[#171717]" />
      <Tabs />
      <MaRow />
      <div className="flex h-[817px] gap-[14px] overflow-hidden pl-[12px]">
        <div className="relative w-[637px]">
          <CandleChart />
          <div className="absolute top-[479px] left-[9px] flex gap-[34px]">
            {tools.map((d) => (
              <svg key={d} className="h-[72px] w-[72px]" viewBox="0 0 72 72">
                <circle cx="36" cy="36" r="36" fill="#525252" opacity="0.7" />
                <path d={d} fill="none" stroke="#b4b4b4" strokeWidth="4" />
              </svg>
            ))}
          </div>
          <DateAxis />
          <Macd />
        </div>
        <ChipPanel />
      </div>
      <DaySheet />
    </div>
  );
}
